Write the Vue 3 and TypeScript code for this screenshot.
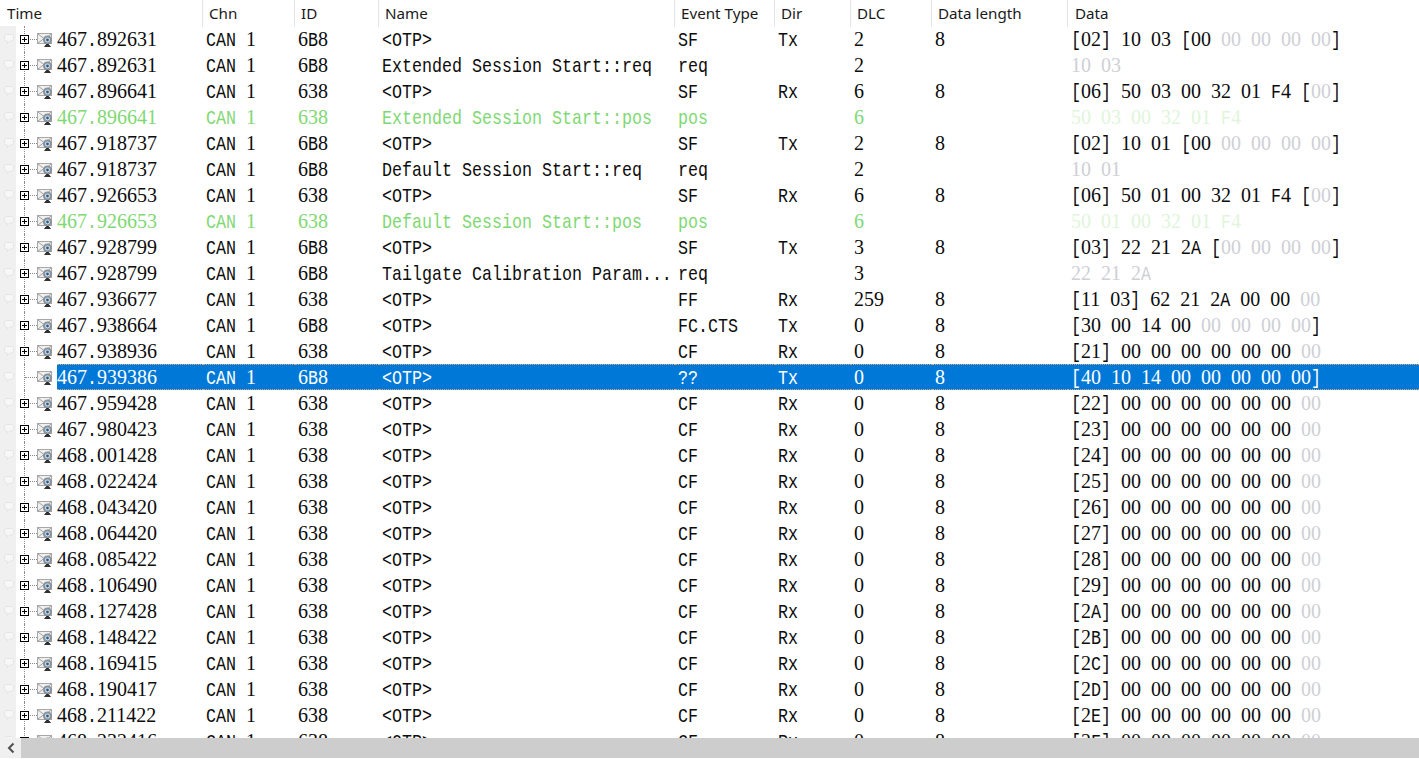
<script setup lang="ts">
interface Row {
  time: string
  id: string
  name: string
  type: string
  dir: string
  dlc: string
  len: string
  data: string
  kind?: 'pos' | 'req' | 'sel'
}

const cf = (time: string, seq: string): Row => ({
  time, id: '638', name: '<OTP>', type: 'CF', dir: 'Rx', dlc: '0', len: '8',
  data: `[${seq}] 00 00 00 00 00 00 {00}`,
})
const otp = (time: string, id: string, type: string, dir: string, dlc: string, data: string): Row => ({
  time, id, name: '<OTP>', type, dir, dlc, len: '8', data,
})

const rows: Row[] = [
  otp('467.892631', '6B8', 'SF', 'Tx', '2', '[02] 10 03 [00 {00 00 00 00}]'),
  { time: '467.892631', id: '6B8', name: 'Extended Session Start::req', type: 'req', dir: '', dlc: '2', len: '', data: '{10 03}', kind: 'req' },
  otp('467.896641', '638', 'SF', 'Rx', '6', '[06] 50 03 00 32 01 F4 [{00}]'),
  { time: '467.896641', id: '638', name: 'Extended Session Start::pos', type: 'pos', dir: '', dlc: '6', len: '', data: '50 03 00 32 01 F4', kind: 'pos' },
  otp('467.918737', '6B8', 'SF', 'Tx', '2', '[02] 10 01 [00 {00 00 00 00}]'),
  { time: '467.918737', id: '6B8', name: 'Default Session Start::req', type: 'req', dir: '', dlc: '2', len: '', data: '{10 01}', kind: 'req' },
  otp('467.926653', '638', 'SF', 'Rx', '6', '[06] 50 01 00 32 01 F4 [{00}]'),
  { time: '467.926653', id: '638', name: 'Default Session Start::pos', type: 'pos', dir: '', dlc: '6', len: '', data: '50 01 00 32 01 F4', kind: 'pos' },
  otp('467.928799', '6B8', 'SF', 'Tx', '3', '[03] 22 21 2A [{00 00 00 00}]'),
  { time: '467.928799', id: '6B8', name: 'Tailgate Calibration Param...', type: 'req', dir: '', dlc: '3', len: '', data: '{22 21 2A}', kind: 'req' },
  otp('467.936677', '638', 'FF', 'Rx', '259', '[11 03] 62 21 2A 00 00 {00}'),
  otp('467.938664', '6B8', 'FC.CTS', 'Tx', '0', '[30 00 14 00 {00 00 00 00}]'),
  cf('467.938936', '21'),
  { ...otp('467.939386', '6B8', '??', 'Tx', '0', '[40 10 14 00 00 00 00 00]'), kind: 'sel' },
  cf('467.959428', '22'),
  cf('467.980423', '23'),
  cf('468.001428', '24'),
  cf('468.022424', '25'),
  cf('468.043420', '26'),
  cf('468.064420', '27'),
  cf('468.085422', '28'),
  cf('468.106490', '29'),
  cf('468.127428', '2A'),
  cf('468.148422', '2B'),
  cf('468.169415', '2C'),
  cf('468.190417', '2D'),
  cf('468.211422', '2E'),
  cf('468.232416', '2F'),
]

const headers = ['Time', 'Chn', 'ID', 'Name', 'Event Type', 'Dir', 'DLC', 'Data length', 'Data']

// "{...}" marks the bytes that are drawn greyed out
function parts(data: string) {
  return data
    .split(/(\{[^}]*\})/)
    .filter(Boolean)
    .map((text) =>
      text.startsWith('{') ? { text: text.slice(1, -1), dim: true } : { text, dim: false },
    )
}

// Digits and other characters use different faces, both 10px per character
function runs(text: string) {
  return (text.match(/\d+|\D+/g) ?? []).map((t) => ({ t, num: /^\d/.test(t) }))
}

const cols = (r: Row) => ['CAN 1', r.id, r.name, r.type, r.dir, r.dlc, r.len]
</script>

<template>
  <div class="trace">
    <div class="head">
      <div v-for="h in headers" :key="h" class="hcell">{{ h }}</div>
    </div>
    <div class="body">
      <div v-for="(r, i) in rows" :key="i" class="row" :class="r.kind">
        <div class="tree">
          <svg class="bubble" width="12" height="13" viewBox="0 0 12 13">
            <path d="M3 1.5h6l1.5 1.5v3.5L9 8H6.5L4 10.5V8H3L1.5 6.5V3z" fill="#f7f7f7" stroke="#e4e4e4" />
          </svg>
          <span class="vline"></span>
          <span class="hline"></span>
          <svg v-if="r.kind !== 'sel'" class="plus" width="9" height="9" viewBox="0 0 9 9">
            <rect x="0.5" y="0.5" width="8" height="8" fill="#fff" stroke="#000" />
            <path d="M2 4.5h5M4.5 2v5" stroke="#000" />
          </svg>
          <svg class="msg" width="16" height="15" viewBox="0 0 16 15">
            <rect x="0.5" y="0.5" width="14" height="10" fill="#f0f0f0" stroke="#a8a8a8" />
            <path d="M1 1l6 4.5L1 10M14 1l-4 3.5" fill="none" stroke="#a0a0a0" />
            <circle cx="10.5" cy="7" r="4.5" fill="#8a929a" />
            <circle cx="10.5" cy="7" r="2.4" fill="#dfe3e6" />
            <circle cx="10.5" cy="7" r="1.4" fill="#1f5f9e" />
            <path d="M7.5 14l2-2.5h2l2 2.5" fill="#333" stroke="#222" />
          </svg>
        </div>
        <div class="cell time"><span v-for="(s, k) in runs(r.time)" :key="k" :class="s.num ? 'num' : 'txt'">{{ s.t }}</span></div>
        <div v-for="(c, n) in cols(r)" :key="n" class="cell"><span v-for="(s, k) in runs(c)" :key="k" :class="s.num ? 'num' : 'txt'">{{ s.t }}</span></div>
        <div class="cell data"><span v-for="(p, j) in parts(r.data)" :key="j" :class="{ dim: p.dim }"><span v-for="(s, k) in runs(p.text)" :key="k" :class="s.num ? 'num' : 'txt'">{{ s.t }}</span></span></div>
      </div>
    </div>
    <div class="hscroll">
      <div class="arrow">
        <svg width="8" height="12" viewBox="0 0 8 12">
          <path d="M6.5 1.5L2 6l4.5 4.5" fill="none" stroke="#505050" stroke-width="2" />
        </svg>
      </div>
      <div class="thumb"></div>
    </div>
  </div>
</template>

<style scoped>
.trace {
  width: 1419px;
  height: 759px;
  display: flex;
  flex-direction: column;
  background: #fff;
  overflow: hidden;
}
.head,
.row {
  display: grid;
  grid-template-columns: 57px 146px 92px 84px 296px 100px 76px 81px 136px 351px;
}
.head {
  height: 26px;
  flex: none;
  grid-template-columns: 203px 92px 84px 296px 100px 76px 81px 136px 351px;
}
.hcell {
  padding-left: 6px;
  font: 15.2px/27px "Noto Sans", sans-serif;
  color: #1a1a1a;
  border-right: 1px solid #e5e5e5;
}
.hcell:first-child {
  padding-left: 7px;
}
.hcell:last-child {
  border-right: 0;
  padding-left: 7px;
}
.body {
  flex: 1;
  min-height: 0;
  overflow: hidden;
  background: linear-gradient(#f0f0f0, #f0f0f0) left / 16px 100% no-repeat;
}
.row {
  height: 26px;
  font: 20px/26px "Liberation Serif", serif;
  color: #0c0c0c;
  white-space: pre;
}
.num {
  font: 20px/1 "Liberation Serif", serif;
}
.txt {
  display: inline-block;
  font: 16.67px/1 "Liberation Mono", monospace;
  transform: scaleY(1.22);
  transform-origin: 50% 78%;
}
.cell {
  padding-left: 3px;
  overflow: hidden;
}
.cell.time {
  padding-left: 0;
}
.tree {
  position: relative;
}
.bubble {
  position: absolute;
  left: 3px;
  top: 7px;
}
.vline {
  position: absolute;
  left: 24px;
  top: 0;
  height: 26px;
  border-left: 1px dotted #8a8a8a;
}
.hline {
  position: absolute;
  left: 25px;
  width: 12px;
  top: 13px;
  border-top: 1px dotted #8a8a8a;
}
.plus {
  position: absolute;
  left: 20px;
  top: 9px;
}
.msg {
  position: absolute;
  left: 37px;
  top: 7px;
}
.dim {
  color: #cfcfd6;
}
.pos {
  color: #7fd873;
}
.pos .data {
  color: #dff5da;
}
.req .data {
  color: #d6d3d3;
}
.sel .cell {
  background: #0078d7;
  color: #fff;
  border-top: 1px dotted #d9a878;
  border-bottom: 1px dotted #d9a878;
  line-height: 24px;
}
.hscroll {
  height: 20px;
  margin-bottom: 1px;
  flex: none;
  display: flex;
  background: #f0f0f0;
}
.arrow {
  width: 21px;
  display: flex;
  align-items: center;
  justify-content: center;
}
.thumb {
  flex: 1;
  background: #cdcdcd;
}
</style>
